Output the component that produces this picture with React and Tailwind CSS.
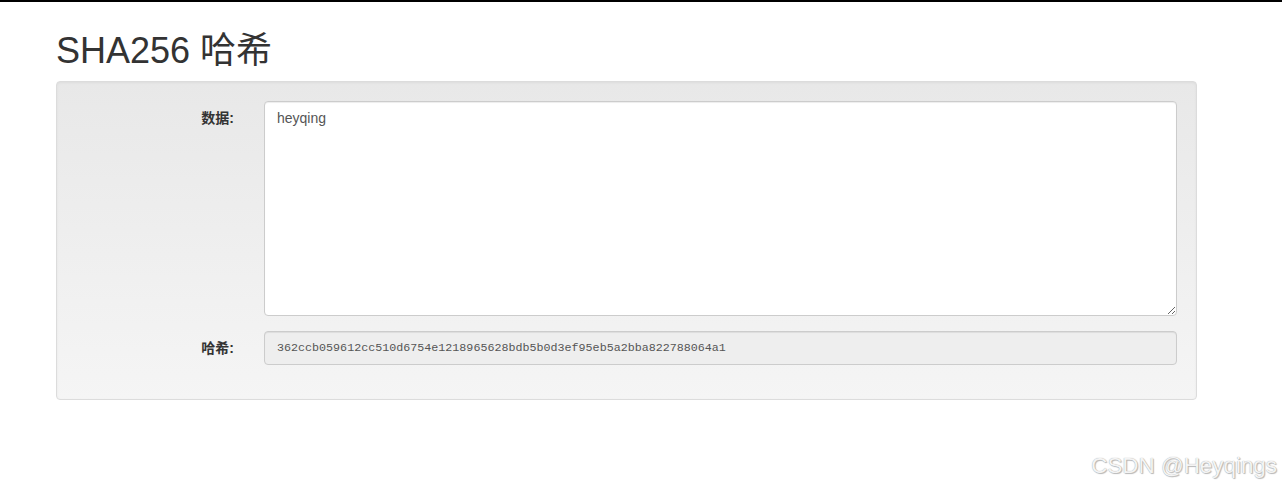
export default function App() {
  const hash = '362ccb059612cc510d6754e1218965628bdb5b0d3ef95eb5a2bba822788064a1';

  return (
    <div className="relative min-h-[488px] bg-white text-[#333] font-['Liberation_Sans','Noto_Sans_CJK_SC',sans-serif]">
      {/* top bar */}
      <div className="h-[2px] bg-black" />

      <div className="ml-[56px] w-[1141px]">
        <h1 className="mt-[29px] mb-[10px] text-[36px] leading-[1.1] font-normal text-[#333]">SHA256 哈希</h1>

        {/* well */}
        <div className="rounded-[4px] border border-[#dcdcdc] bg-gradient-to-b from-[#e8e8e8] to-[#f5f5f5] p-[19px] shadow-[inset_0_1px_3px_rgba(0,0,0,0.05)]">
          <div className="flex gap-[30px] mb-[15px]">
            <label className="w-[158px] shrink-0 pt-[7px] text-right text-[14px] leading-[20px] font-bold">数据:</label>
            <textarea
              defaultValue="heyqing"
              className="flex-1 h-[215px] rounded-[4px] border border-[#ccc] bg-white px-[12px] py-[6px] text-[14px] leading-[20px] text-[#555] shadow-[inset_0_1px_1px_rgba(0,0,0,0.075)] outline-none"
            />
          </div>
          <div className="flex gap-[30px] mb-[15px]">
            <label className="w-[158px] shrink-0 pt-[7px] text-right text-[14px] leading-[20px] font-bold">哈希:</label>
            <input
              readOnly
              value={hash}
              className="flex-1 h-[34px] rounded-[4px] border border-[#ccc] bg-[#eee] px-[12px] text-[11.7px] text-[#555] font-['Liberation_Mono',monospace] shadow-[inset_0_1px_1px_rgba(0,0,0,0.075)] outline-none"
            />
          </div>
        </div>
      </div>

      {/* watermark */}
      <div className="absolute right-[5px] top-[452px] text-[22.4px] leading-[28px] text-[#f4f4f4] [text-shadow:0_0_1px_#999,1px_1px_1px_#bbb]">
        CSDN @Heyqings
      </div>
    </div>
  );
}
